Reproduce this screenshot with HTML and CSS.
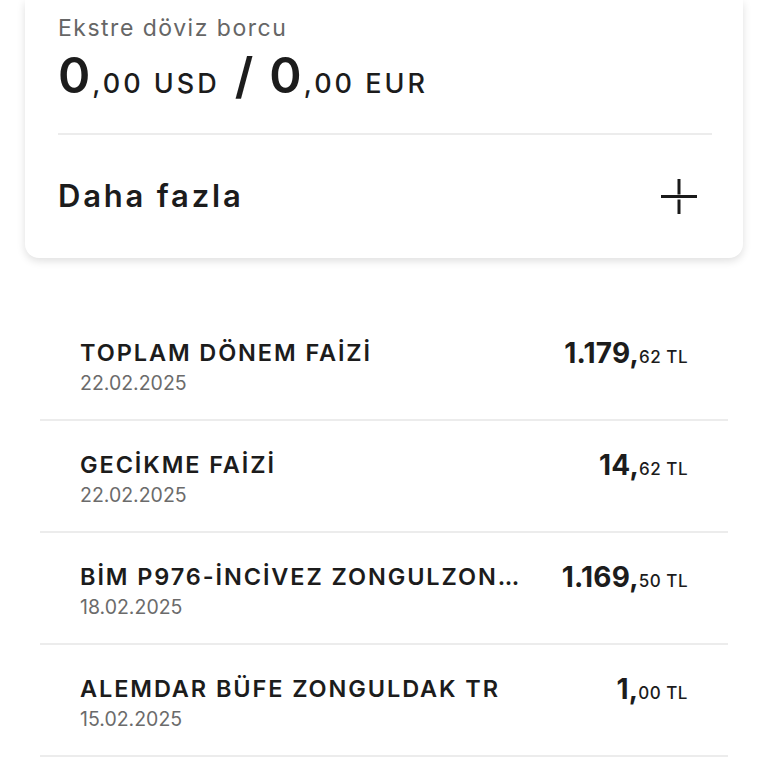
FILE: index.html
```html
<!DOCTYPE html>
<html lang="tr">
<head>
<meta charset="utf-8">
<link rel="stylesheet" href="styles.css">
</head>
<body>
<div class="page">
  <section class="card">
    <div class="label">Ekstre döviz borcu</div>
    <div class="fx"><span class="big">0</span><span class="small">,00 USD</span><span class="slash">/</span><span class="big">0</span><span class="small">,00 EUR</span></div>
    <div class="divider"></div>
    <div class="more">
      <span class="more-text">Daha fazla</span>
      <svg class="plus" width="36" height="36" viewBox="0 0 36 36">
        <path d="M0 17.5H36M18 0V15.5M18 20.5V35" stroke="#1a1a1a" stroke-width="3" fill="none"/>
      </svg>
    </div>
  </section>

  <ul class="list">
    <li class="row">
      <div class="info">
        <div class="title">TOPLAM DÖNEM FAİZİ</div>
        <div class="date">22.02.2025</div>
      </div>
      <div class="amount"><span class="int">1.179,</span><span class="dec">62 TL</span></div>
    </li>
    <li class="row">
      <div class="info">
        <div class="title">GECİKME FAİZİ</div>
        <div class="date">22.02.2025</div>
      </div>
      <div class="amount"><span class="int">14,</span><span class="dec">62 TL</span></div>
    </li>
    <li class="row">
      <div class="info">
        <div class="title">BİM P976-İNCİVEZ ZONGULZON<span class="dots">...</span></div>
        <div class="date">18.02.2025</div>
      </div>
      <div class="amount"><span class="int">1.169,</span><span class="dec">50 TL</span></div>
    </li>
    <li class="row">
      <div class="info">
        <div class="title">ALEMDAR BÜFE ZONGULDAK TR</div>
        <div class="date">15.02.2025</div>
      </div>
      <div class="amount"><span class="int">1,</span><span class="dec">00 TL</span></div>
    </li>
  </ul>
</div>
</body>
</html>
```

FILE: styles.css
```css
* { box-sizing: border-box; }
html, body {
  margin: 0;
  padding: 0;
  background: #ffffff;
}
body {
  font-family: "Inter", "Noto Sans", sans-serif;
  color: #1c1c1c;
  width: 768px;
  height: 768px;
  overflow: hidden;
}
.page {
  display: flex;
  flex-direction: column;
}
.card {
  margin: 0 25px;
  padding: 14px 31px 44px 33px;
  background: #fff;
  border-radius: 0 0 14px 14px;
  box-shadow: 0 3px 8px rgba(0, 0, 0, 0.13);
}
.label {
  font-size: 23px;
  line-height: 28px;
  letter-spacing: 1.5px;
  color: #666666;
}
.fx {
  margin-top: 6px;
  font-size: 49px;
  line-height: 56px;
  white-space: nowrap;
}
.fx span { line-height: 1; }
.fx .big { font-size: 49px; font-weight: 600; letter-spacing: 2px; }
.fx .small { font-size: 27px; font-weight: 500; letter-spacing: 3px; }
.fx .slash { font-size: 49px; font-weight: 600; margin: 0 16px 0 15px; }
.divider {
  margin-top: 29px;
  height: 2px;
  background: #ececec;
}
.more {
  margin-top: 43px;
  display: flex;
  align-items: center;
  justify-content: space-between;
  height: 36px;
}
.more-text {
  font-size: 31px;
  font-weight: 600;
  line-height: 36px;
  letter-spacing: 2.8px;
}
.plus { display: block; margin: 2px 15px 0 0; }
.list {
  list-style: none;
  margin: 51px 40px 0 40px;
  padding: 0;
}
.row {
  height: 112px;
  border-bottom: 2px solid #ececec;
  padding: 30px 40px 0 40px;
  display: flex;
  align-items: flex-start;
  justify-content: space-between;
}
.title {
  font-size: 23.5px;
  line-height: 28px;
  font-weight: 600;
  letter-spacing: 1.9px;
  white-space: nowrap;
}
.title .dots { letter-spacing: -0.5px; }
.date {
  margin-top: 4px;
  font-size: 19.5px;
  line-height: 24px;
  color: #6b6b6b;
}
.amount {
  white-space: nowrap;
  line-height: 32px;
}
.amount span { line-height: 1; }
.amount .int { font-size: 28px; font-weight: 700; letter-spacing: 0.2px; }
.amount .dec { font-size: 17px; font-weight: 500; letter-spacing: 0.5px; }
```
